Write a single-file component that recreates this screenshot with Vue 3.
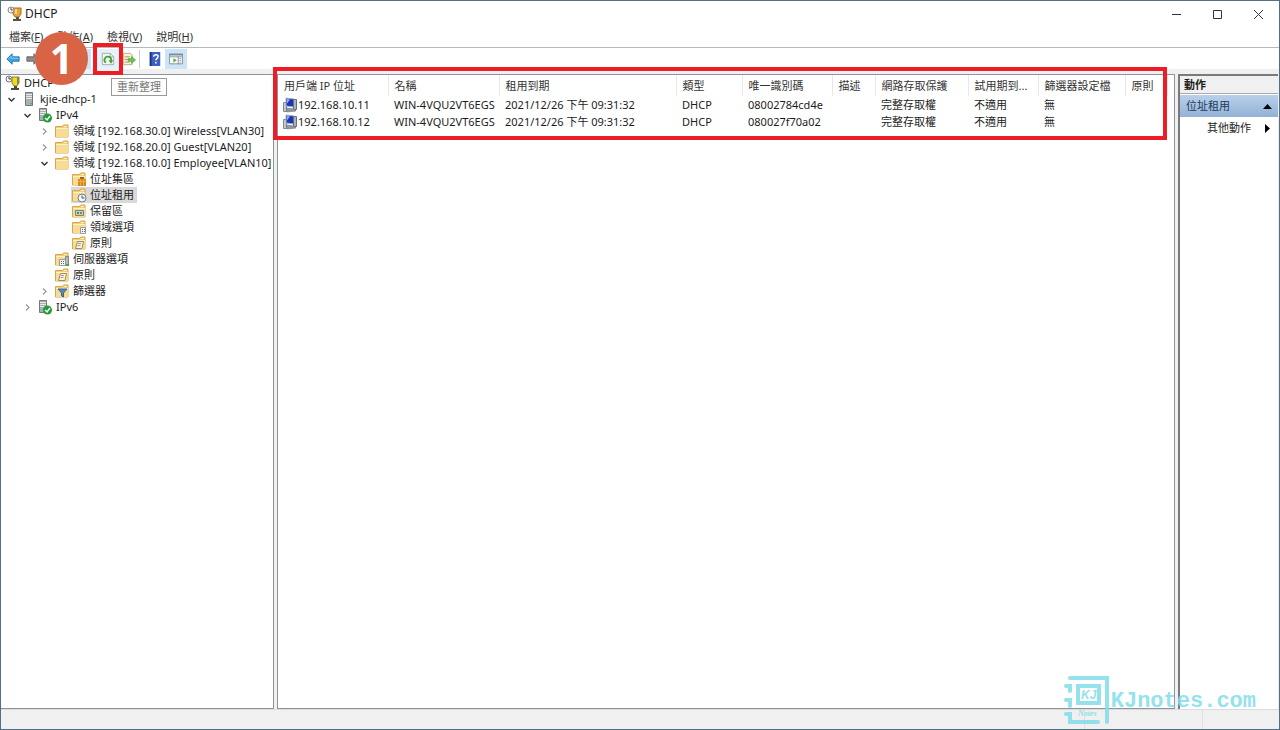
<script setup>
const menus = [
  { label: '檔案', key: 'F' },
  { label: '動作', key: 'A' },
  { label: '檢視', key: 'V' },
  { label: '說明', key: 'H' },
]

const tree = [
  { level: 0, icon: 'dhcp', text: 'DHCP' },
  { level: 1, icon: 'server', text: 'kjie-dhcp-1', state: 'open' },
  { level: 2, icon: 'serverOk', text: 'IPv4', state: 'open' },
  { level: 3, icon: 'folder', text: '領域 [192.168.30.0] Wireless[VLAN30]', state: 'closed' },
  { level: 3, icon: 'folder', text: '領域 [192.168.20.0] Guest[VLAN20]', state: 'closed' },
  { level: 3, icon: 'folder', text: '領域 [192.168.10.0] Employee[VLAN10]', state: 'open' },
  { level: 4, icon: 'pool', text: '位址集區' },
  { level: 4, icon: 'lease', text: '位址租用', selected: true },
  { level: 4, icon: 'reserve', text: '保留區' },
  { level: 4, icon: 'options', text: '領域選項' },
  { level: 4, icon: 'policy', text: '原則' },
  { level: 3, icon: 'serverOptions', text: '伺服器選項' },
  { level: 3, icon: 'policy', text: '原則' },
  { level: 3, icon: 'filter', text: '篩選器', state: 'closed' },
  { level: 2, icon: 'serverOk', text: 'IPv6', state: 'closed' },
]

const columns = ['用戶端 IP 位址', '名稱', '租用到期', '類型', '唯一識別碼', '描述', '網路存取保護', '試用期到...', '篩選器設定檔', '原則']

const leases = [
  ['192.168.10.11', 'WIN-4VQU2VT6EGS', '2021/12/26 下午 09:31:32', 'DHCP', '08002784cd4e', '', '完整存取權', '不適用', '無', ''],
  ['192.168.10.12', 'WIN-4VQU2VT6EGS', '2021/12/26 下午 09:31:32', 'DHCP', '080027f70a02', '', '完整存取權', '不適用', '無', ''],
]

const folderIcons = ['folder', 'pool', 'lease', 'reserve', 'options', 'policy', 'serverOptions', 'filter']
</script>

<template>
  <div class="window">
    <header class="titlebar">
      <svg class="app-icon" viewBox="0 0 16 16" width="16" height="16">
        <path d="M6 2h8v6l-2 3H8L6 8z" fill="#e8a33a" stroke="#a86a18" />
        <path d="M8 3h2v5H8z" fill="#f8d488" />
        <path d="M9 11h3v2h2v2H6v-2h3z" fill="#5a5148" />
        <circle cx="4" cy="4" r="3" fill="#f2f2f2" stroke="#8a8a8a" />
        <path d="M4 2v2h2" fill="none" stroke="#555" />
      </svg>
      <h1>DHCP</h1>
      <div class="window-controls">
        <button type="button" aria-label="最小化">
          <svg viewBox="0 0 11 11" width="11" height="11"><path d="M1 5.500h9" stroke="#333" /></svg>
        </button>
        <button type="button" aria-label="最大化">
          <svg viewBox="0 0 11 11" width="11" height="11"><path d="M1.500 1.500h8v8h-8z" fill="none" stroke="#333" /></svg>
        </button>
        <button type="button" aria-label="關閉">
          <svg viewBox="0 0 11 11" width="11" height="11"><path d="M1 1l9 9M10 1l-9 9" stroke="#333" /></svg>
        </button>
      </div>
    </header>

    <nav class="menubar">
      <button v-for="m in menus" :key="m.key" type="button">{{ m.label }}(<u>{{ m.key }}</u>)</button>
    </nav>

    <div class="toolbar">
      <button type="button" aria-label="上一頁">
        <svg viewBox="0 0 16 16" width="16" height="16"><path d="M1 8l6-6v3.500h8v5H7V14z" fill="#3ba4e4" stroke="#1a6fb0" /><path d="M3 8l3-3v2h8" fill="none" stroke="#8fd2f7" /></svg>
      </button>
      <button type="button" aria-label="下一頁">
        <svg viewBox="0 0 16 16" width="16" height="16"><path d="M15 8L9 2v3.500H1v5h8V14z" fill="#8c8c8c" stroke="#5c5c5c" /></svg>
      </button>
      <span class="sep"></span>
      <button type="button" aria-label="上移一層">
        <svg viewBox="0 0 16 16" width="16" height="16"><path d="M1 3h5l1 2h8v9H1z" fill="#f5cf73" stroke="#c79a3a" /></svg>
      </button>
      <button type="button" class="wide on" aria-label="顯示樹狀目錄">
        <svg viewBox="0 0 16 16" width="16" height="16"><path d="M1.500 2.500h13v11h-13z" fill="#fff" stroke="#777" /><path d="M1 3h14v2H1zM6 5h1v9H6z" fill="#777" /></svg>
      </button>
      <span class="sep"></span>
      <div class="anchor">
        <button type="button" class="wide hover" aria-label="重新整理">
          <svg viewBox="0 0 16 16" width="16" height="16">
            <path d="M1.500 1.500h9l4 4v9h-13z" fill="#f4f6f4" stroke="#a3a3a3" />
            <path d="M10.500 1.500v4h4" fill="none" stroke="#a3a3a3" />
            <path d="M5.500 12.200A3.800 3.800 0 1 1 11.500 10" fill="none" stroke="#3fa535" stroke-width="2" />
            <path d="M8.500 9.500l5.500 0-2.500 4z" fill="#3fa535" />
          </svg>
        </button>
        <span class="mark-box"></span>
        <span class="tip" role="tooltip">重新整理</span>
      </div>
      <button type="button" aria-label="匯出清單">
        <svg viewBox="0 0 16 16" width="16" height="16">
          <path d="M1.500 1.500h8l2 2v11h-10z" fill="#fbf4cf" stroke="#b3a67a" />
          <path d="M3 5.500h6M3 8.500h4M3 11.500h6" stroke="#8d8d8d" />
          <path d="M7 7.500h4V5l4.500 4-4.500 4v-2.500H7z" fill="#66c64c" stroke="#3b9a2b" stroke-width=".6" />
        </svg>
      </button>
      <span class="sep line"></span>
      <button type="button" aria-label="說明">
        <svg viewBox="0 0 16 16" width="16" height="16">
          <path d="M2 0h12v16H2z" fill="#3c60c4" /><path d="M2 0h2v16H2z" fill="#1b3378" />
          <path d="M6.500 5.500c0-3 5-3 5 0 0 2-2.500 1.800-2.500 4M9 11v2" fill="none" stroke="#fff" stroke-width="1.700" />
        </svg>
      </button>
      <button type="button" class="wide on" aria-label="顯示動作窗格">
        <svg viewBox="0 0 16 16" width="16" height="16">
          <path d="M.5 2.500h15v11H.5z" fill="#fff" stroke="#7d8891" />
          <path d="M0 2h16v2H0z" fill="#7d8891" /><path d="M10.500 5v9M1 5.500h14" stroke="#7d8891" />
          <path d="M5 7l4 2.500L5 12z" fill="#46b03a" /><path d="M12 7.500h2M12 9.500h2M12 11.500h2" stroke="#8a949c" />
        </svg>
      </button>
      <span class="step">1</span>
    </div>

    <main class="body">
      <ul class="tree pane">
        <li v-for="(n, i) in tree" :key="i" :class="'level-' + n.level">
          <span v-if="n.level" class="chevron">
            <svg v-if="n.state" viewBox="0 0 9 9" width="9" height="9">
              <path v-if="n.state === 'open'" d="M1.500 3l3 3 3-3" fill="none" stroke="#333" stroke-width="1.400" />
              <path v-else d="M3 1.500l3 3-3 3" fill="none" stroke="#999" stroke-width="1.200" />
            </svg>
          </span>
          <button type="button" :class="{ selected: n.selected }">
            <svg viewBox="0 0 16 16" width="16" height="16">
              <g v-if="folderIcons.includes(n.icon)">
                <path d="M1.500 3.500h7l1-1.500h4.500v12h-12.500z" fill="#f3ce78" stroke="#d5a84c" />
                <path d="M2 5.500h12M10 3.500h3" stroke="#fdf0c4" />
                <path d="M2 6h12v8H2z" fill="#f9dc93" />
              </g>
              <g v-if="n.icon === 'dhcp'">
                <path d="M7 2h7v6l-2 3H9L7 8z" fill="#f0dc1e" stroke="#8f8320" />
                <path d="M12 2h2v6l-2 2z" fill="#8c8450" />
                <path d="M9 11h3v2h2v2H6v-2h3z" fill="#4a4a42" />
                <circle cx="4" cy="4" r="3" fill="#f2f2f2" stroke="#777" />
                <path d="M4 2v2h2" fill="none" stroke="#444" />
              </g>
              <g v-if="n.icon === 'server'">
                <path d="M4.500 1.500h7v13h-7z" fill="#a9aeb3" stroke="#73787d" />
                <path d="M5 3.500h6M5 5.500h6M5 7.500h6" stroke="#e6e8ea" /><path d="M9 12h2v1H9z" fill="#4cc53c" />
              </g>
              <g v-if="n.icon === 'serverOk'">
                <path d="M2.500 1.500h7v12h-7z" fill="#a9aeb3" stroke="#73787d" />
                <path d="M3 3.500h6M3 5.500h6M3 7.500h6" stroke="#e6e8ea" />
                <circle cx="10.500" cy="11" r="4.500" fill="#229a35" /><path d="M8 11l2 2 3-4" fill="none" stroke="#fff" stroke-width="1.400" />
              </g>
              <g v-if="n.icon === 'pool'">
                <path d="M7 8h8v7H7z" fill="#d98a1c" /><path d="M7 10.500h8M9.500 8v7M12.500 8v7" stroke="#f0b95a" stroke-width=".7" /><path d="M9 6h4v2H9z" fill="#a56410" />
              </g>
              <g v-if="n.icon === 'lease'">
                <circle cx="11" cy="11" r="4" fill="#eef4fa" stroke="#6f8194" /><path d="M11 8.500V11h2.500" fill="none" stroke="#41556b" />
              </g>
              <g v-if="n.icon === 'reserve'">
                <path d="M4.500 7.500h8v5h-8z" fill="#c7d3c6" stroke="#7c8570" /><path d="M6 9h2v2H6z" fill="#3f9b44" /><path d="M9 9h2v2H9z" fill="#7086a0" />
              </g>
              <g v-if="n.icon === 'options'">
                <path d="M9.500 8.500h5v6h-5z" fill="#f6f6f6" stroke="#999" /><path d="M11 10h1v1h-1zM13 10h1v1h-1zM11 12h1v1h-1zM13 12h1v1h-1z" fill="#666" />
              </g>
              <g v-if="n.icon === 'policy'">
                <path d="M6.500 6.500h6l-1.500 7H4.500z" fill="#f8f4e6" stroke="#a58b52" /><path d="M7 8.500h3M6.500 10.500h3" stroke="#9b9b9b" />
              </g>
              <g v-if="n.icon === 'serverOptions'">
                <path d="M11.500 5.500h3v9h-3z" fill="#b6bbc0" stroke="#7d8287" /><path d="M5.500 8.500h6v6h-6z" fill="#f3f3f3" stroke="#999" />
                <path d="M7 10h1v1H7zM9 10h1v1H9zM7 12h1v1H7zM9 12h1v1H9z" fill="#666" /><path d="M12 13h3v2h-3z" fill="#3cae3c" />
              </g>
              <path v-if="n.icon === 'filter'" d="M4 6h9l-3.500 4v4l-2-1v-3z" fill="#5a86b8" stroke="#3d6798" />
            </svg>
            <span>{{ n.text }}</span>
          </button>
        </li>
      </ul>

      <section class="list pane">
        <span class="mark-box"></span>
        <table>
          <colgroup>
            <col class="c-ip" /><col class="c-name" /><col class="c-expire" /><col class="c-type" /><col class="c-id" />
            <col class="c-desc" /><col class="c-nap" /><col class="c-trial" /><col class="c-filter" /><col class="c-policy" />
          </colgroup>
          <thead>
            <tr><th v-for="c in columns" :key="c" scope="col">{{ c }}</th></tr>
          </thead>
          <tbody>
            <tr v-for="row in leases" :key="row[0]">
              <td v-for="(cell, i) in row" :key="i">
                <span v-if="i === 0" class="client">
                  <svg viewBox="0 0 16 16" width="16" height="16">
                    <path d="M1.500 5.500h3v9h-3z" fill="#c8cbce" stroke="#84888c" />
                    <path d="M4 1l8 1v8L4 9z" fill="#1d35b8" stroke="#a6b0c0" />
                    <path d="M5 2l3 .5-3 4z" fill="#8fb2f0" />
                    <path d="M11.500 2.500h3v10h-3z" fill="#aab2bd" stroke="#66707c" />
                    <path d="M4 11l8 1 2 2-9 1z" fill="#8d99a8" stroke="#66707c" stroke-width=".6" />
                  </svg>
                  <span>{{ cell }}</span>
                </span>
                <template v-else>{{ cell }}</template>
              </td>
            </tr>
          </tbody>
        </table>
      </section>

      <aside class="actions">
        <h2>動作</h2>
        <button type="button" class="group">
          <span>位址租用</span>
          <svg viewBox="0 0 9 5" width="9" height="5"><path d="M0 5l4.500-5L9 5z" fill="#000" /></svg>
        </button>
        <button type="button" class="more">
          <span>其他動作</span>
          <svg viewBox="0 0 9 9" width="9" height="9"><path d="M2 0l5 4.500L2 9z" fill="#000" /></svg>
        </button>
      </aside>
    </main>

    <footer class="statusbar"><span class="cell"></span><span class="cell last"></span></footer>

    <div class="watermark">
      <svg viewBox="0 0 48 50" width="48" height="50">
        <g fill="none" stroke="#82dde8" stroke-width="4" stroke-linecap="round">
          <path d="M7 3h37v44" />
          <path d="M3 11h4v5M3 25h4v6M3 39h4v8h28" />
          <path d="M15 11h21v17H15z" />
        </g>
        <text x="18" y="24" class="wm-kj">KJ</text>
        <text x="15" y="41" class="wm-notes">Notes</text>
      </svg>
      <span>KJnotes.com</span>
    </div>
  </div>
</template>

<style>
body {
  margin: 0;
}
</style>

<style scoped>
.window {
  position: relative;
  box-sizing: border-box;
  min-height: 100vh;
  display: flex;
  flex-direction: column;
  border: 1px solid #4f7187;
  background: #fff;
  color: #1c1c1c;
  font: 11px/16px "Noto Sans", "Noto Sans CJK TC", sans-serif;
}
button {
  margin: 0;
  padding: 0;
  border: 0;
  background: none;
  color: inherit;
  font: inherit;
}
svg {
  flex: none;
  display: block;
}
.titlebar {
  height: 26px;
  display: flex;
  align-items: center;
  padding-left: 6px;
}
.titlebar h1 {
  flex: 1;
  margin: 0 0 0 2px;
  font-size: 12px;
  font-weight: 400;
}
.window-controls {
  display: flex;
}
.window-controls button {
  width: 41px;
  height: 26px;
  display: grid;
  place-items: center;
}
.menubar {
  height: 20px;
  display: flex;
  align-items: center;
  gap: 14px;
  padding-left: 8px;
  border-bottom: 1px solid #b8b8b8;
  color: #333;
}
.toolbar {
  position: relative;
  height: 21px;
  display: flex;
  align-items: center;
  padding-left: 2px;
  border-bottom: 5px solid #f0f0f0;
}
.toolbar button {
  width: 20px;
  height: 20px;
  display: grid;
  place-items: center;
}
.toolbar .wide {
  width: 22px;
}
.toolbar .on {
  background: #cce4f7;
}
.toolbar .hover {
  background: #e5f1fb;
}
.toolbar button svg {
  width: 14px;
  height: 14px;
}
.sep {
  box-sizing: border-box;
  width: 6px;
  height: 18px;
}
.line {
  border-left: 1px solid #ccc;
}
.anchor {
  position: relative;
}
.mark-box {
  position: absolute;
  z-index: 3;
  box-sizing: border-box;
  border: 4px solid #ee1c25;
  pointer-events: none;
}
.anchor .mark-box {
  inset: -6px -4px;
}
.tip {
  position: absolute;
  z-index: 2;
  top: 29px;
  left: 14px;
  padding: 0 5px;
  border: 1px solid #999;
  background: #fff;
  color: #777;
  white-space: nowrap;
}
.step {
  position: absolute;
  z-index: 4;
  top: -16px;
  left: 34px;
  width: 53px;
  height: 53px;
  border-radius: 50%;
  background: #d86345;
  color: #fff;
  font-size: 41px;
  font-weight: 700;
  line-height: 52px;
  text-align: center;
}
.body {
  flex: 1;
  display: flex;
  gap: 3px;
  background: #f0f0f0;
}
.pane {
  position: relative;
  box-sizing: border-box;
  border: 1px solid #8e939c;
  background: #fff;
}
.tree {
  flex: none;
  width: 273px;
  margin: 0;
  padding: 0;
  border-left: 0;
  list-style: none;
}
.tree li {
  height: 16px;
  display: flex;
  align-items: center;
  white-space: nowrap;
}
.level-0,
.level-1 {
  padding-left: 4px;
}
.level-2 {
  padding-left: 20px;
}
.level-3 {
  padding-left: 37px;
}
.level-4 {
  padding-left: 54px;
}
.chevron {
  flex: none;
  width: 16px;
  padding-left: 2px;
  box-sizing: border-box;
}
.tree button {
  flex: none;
  height: 16px;
  display: flex;
  align-items: center;
  gap: 3px;
  padding-right: 3px;
}
.tree .selected {
  background: #d9d9d9;
}
.list {
  flex: 1;
  min-width: 0;
}
.list .mark-box {
  top: -8px;
  left: -5px;
  right: 7px;
  height: 73px;
}
table {
  width: 889px;
  table-layout: fixed;
  border-collapse: collapse;
}
.c-ip { width: 110px; }
.c-name { width: 111px; }
.c-expire { width: 177px; }
.c-type { width: 66px; }
.c-id { width: 90px; }
.c-desc { width: 43px; }
.c-nap { width: 93px; }
.c-trial { width: 70px; }
.c-filter { width: 87px; }
.c-policy { width: 42px; }
th,
td {
  box-sizing: border-box;
  padding: 0 0 0 6px;
  overflow: hidden;
  font-weight: 400;
  text-align: left;
  white-space: nowrap;
}
th {
  height: 21px;
  border-right: 1px solid #e8e8e8;
  color: #333;
}
td {
  height: 17px;
}
.client {
  display: flex;
  align-items: center;
  margin-left: -2px;
}
.actions {
  box-sizing: border-box;
  flex: none;
  width: 100px;
  margin-right: 1px;
  border-top: 2px solid #7a7a7a;
  border-left: 2px solid #7a7a7a;
  background: #fff;
}
.actions h2 {
  height: 17px;
  margin: 0 0 1px;
  padding-left: 4px;
  border-bottom: 1px solid #aaa;
  background: #f0f0f0;
  font-size: 11px;
  font-weight: 700;
  line-height: 17px;
}
.actions button {
  width: 100%;
  height: 22px;
  display: flex;
  align-items: center;
  justify-content: space-between;
  padding: 0 6px;
  color: #222;
}
.actions .group {
  background: linear-gradient(#b9d0e9, #92b1d6);
  color: #1d3a5c;
}
.actions .more {
  padding-left: 27px;
}
.statusbar {
  height: 19px;
  display: flex;
  justify-content: flex-end;
  border-top: 1px solid #dcdcdc;
  background: #f0f0f0;
}
.cell {
  width: 117px;
  border-left: 1px solid #e0e0e0;
}
.last {
  width: 76px;
}
.watermark {
  position: absolute;
  z-index: 5;
  right: 23px;
  bottom: 4px;
  display: flex;
  align-items: center;
  color: #82dde8;
  font: 700 22px/24px "Liberation Mono", monospace;
  opacity: 0.85;
}
.watermark span {
  padding-top: 4px;
}
.wm-kj,
.wm-notes {
  fill: #82dde8;
  font: italic 700 12px "Liberation Sans", sans-serif;
}
.wm-notes {
  font: italic 700 8px "Liberation Serif", serif;
}
</style>
